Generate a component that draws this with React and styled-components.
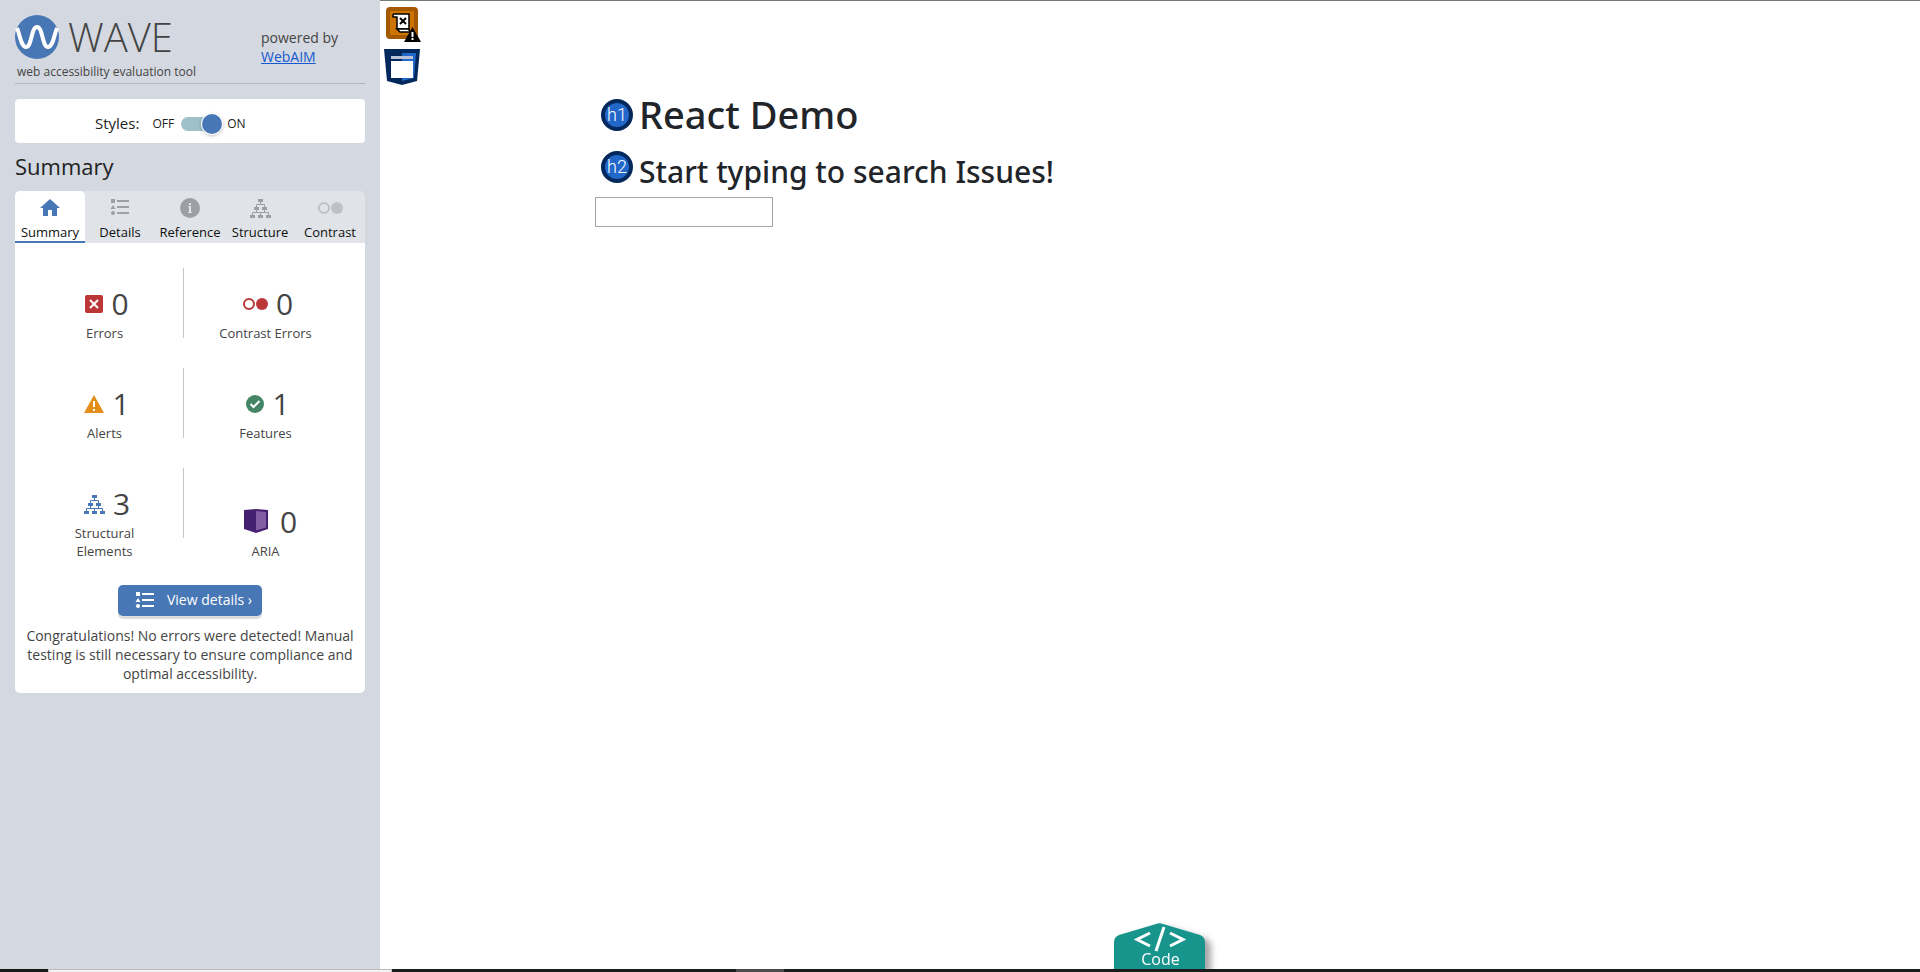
import React, { useState } from "react";
import styled, { createGlobalStyle } from "styled-components";

const GlobalStyle = createGlobalStyle`
  *, *::before, *::after { box-sizing: border-box; }
  body {
    margin: 0;
    background: #fff;
    color: #444;
    font-family: "Open Sans", "Noto Sans", sans-serif;
    font-size: 14px;
  }
  h1, h2, p, ul { margin: 0; padding: 0; font-weight: 400; }
  button, input { font-family: inherit; }
  svg { display: block; flex: none; }
`;

const Screen = styled.div`
  display: flex;
  flex-direction: column;
  min-height: 100vh;
`;

const Workspace = styled.div`
  display: flex;
  flex: 1;
`;

/* ---------- Sidebar ---------- */

const Sidebar = styled.aside`
  flex: none;
  width: 380px;
  padding: 15px;
  background: #d4d8e0;
`;

const Header = styled.header`
  display: flex;
  justify-content: space-between;
  height: 69px;
  border-bottom: 1px solid #b3b7bb;
`;

const Brand = styled.div`
  display: flex;
  flex-direction: column;
`;

const Logo = styled.div`
  display: flex;
  align-items: center;
  gap: 9px;
  height: 44px;
  font-size: 40px;
  font-weight: 300;
  line-height: 44px;
`;

const Tagline = styled.span`
  padding: 4px 2px 0;
  font-size: 12px;
  line-height: 18px;
`;

const Powered = styled.div`
  width: 104px;
  padding-top: 13px;
  line-height: 19px;
`;

const BrandLink = styled.a`
  display: table;
  color: #1558d0;
`;

const StylesCard = styled.div`
  display: flex;
  align-items: center;
  height: 44px;
  margin-top: 15px;
  padding: 6px 80px 0;
  border-radius: 4px;
  background: #fff;
  color: #222;
`;

const StylesLabel = styled.label`
  margin-right: 13px;
  padding-bottom: 2px;
  font-size: 15px;
  line-height: 20px;
`;

const StateText = styled.span`
  font-size: 12px;
  line-height: 16px;
`;

const Toggle = styled.input`
  appearance: none;
  position: relative;
  width: 41px;
  height: 20px;
  margin: 0 5px 0 7px;
  cursor: pointer;

  &::before {
    content: "";
    position: absolute;
    inset: 3px 2px 3px 0;
    border-radius: 7px;
    background: #9fc1ca;
  }

  &::after {
    content: "";
    position: absolute;
    top: 0;
    left: ${({ checked }) => (checked ? "21px" : "0")};
    width: 20px;
    height: 20px;
    border-radius: 50%;
    background: #4777b5;
    box-shadow: 0 0 0 1px #fff, 0 1px 4px rgba(0, 0, 0, 0.4);
  }
`;

const SectionTitle = styled.h2`
  padding: 7px 0 9px;
  color: #222;
  font-size: 22px;
  line-height: 32px;
`;

const TabList = styled.div`
  display: grid;
  grid-template-columns: repeat(5, 1fr);
  border-radius: 5px 5px 0 0;
  background: #e0e3e7;
`;

const Tab = styled.button`
  display: flex;
  flex-direction: column;
  align-items: center;
  gap: 4px;
  height: 52px;
  padding: 7px 0 0;
  border: 0;
  border-bottom: 2px solid ${({ $active }) => ($active ? "#4777b5" : "transparent")};
  border-radius: 5px 5px 0 0;
  background: ${({ $active }) => ($active ? "#fff" : "transparent")};
  color: #111;
  font-size: 13px;
  line-height: 20px;
  cursor: pointer;
`;

const TabIcon = styled.span`
  display: flex;
  color: ${({ $active }) => ($active ? "#4777b5" : "#9c9fa3")};
  opacity: ${({ $dim }) => ($dim ? 0.5 : 1)};
`;

const Panel = styled.section`
  padding: 25px 0 10px;
  border-radius: 0 0 5px 5px;
  background: #fff;
`;

const StatList = styled.ul`
  display: flex;
  flex-direction: column;
  gap: 26px;
  padding: 0 18px 0 11px;
  list-style: none;
`;

const StatRow = styled.li`
  display: grid;
  grid-template-columns: 157fr 1px 163fr;
  align-items: end;
`;

const Divider = styled.span`
  align-self: start;
  height: 70px;
  background: #c4c6c9;
`;

const Stat = styled.div`
  display: flex;
  flex-direction: column;
  align-items: center;
  padding-top: 16px;
`;

const StatCount = styled.div`
  display: flex;
  align-items: center;
  gap: 8px;
  height: 40px;
  padding-left: ${({ $wide }) => ($wide ? "10px" : "5px")};
  font-size: 30px;
  line-height: 40px;
`;

const StatLabel = styled.span`
  width: ${({ $narrow }) => ($narrow ? "80px" : "auto")};
  font-size: 13px;
  line-height: 18px;
  text-align: center;
`;

const DetailsButton = styled.button`
  display: flex;
  align-items: center;
  gap: 12px;
  height: 31px;
  margin: 25px auto 10px;
  padding: 0 10px 0 17px;
  border: 0;
  border-radius: 5px;
  background: #4777b5;
  box-shadow: 0 3px 0 #ddd;
  color: #fff;
  font-size: 14px;
  line-height: 20px;
  cursor: pointer;
`;

const ButtonText = styled.span`
  padding-bottom: 2px;
`;

const Message = styled.p`
  padding: 0 8px;
  line-height: 19px;
  text-align: center;
`;

/* ---------- Evaluated page ---------- */

const Page = styled.main`
  position: relative;
  flex: 1;
  border-top: 1px solid #747b70;
`;

const PageMarkers = styled.div`
  position: absolute;
  top: 6px;
  left: 4px;
  display: flex;
  flex-direction: column;
  gap: 5px;
`;

const Container = styled.div`
  max-width: 1140px;
  margin: 0 auto;
  padding: 90px 15px 0;
  color: #212529;
  font-family: "Noto Sans", "Open Sans", sans-serif;
`;

const HeadingLine = styled.div`
  display: flex;
  align-items: flex-start;
  gap: 6px;
  padding-left: 6px;
  margin-bottom: ${({ $level }) => ($level === 1 ? "14px" : "4px")};
`;

const PageTitle = styled.h1`
  font-size: 38px;
  font-weight: 500;
  line-height: 46px;
`;

const PageSubtitle = styled.h2`
  font-size: 30px;
  font-weight: 500;
  line-height: 42px;
`;

const SearchInput = styled.input`
  display: block;
  width: 178px;
  height: 30px;
  border: 1px solid #a5a5a5;
  background: #fff;
  font-size: 16px;
`;

const HeadingBadge = styled.span`
  display: flex;
  align-items: center;
  justify-content: center;
  width: 32px;
  height: 32px;
  margin-top: ${({ $level }) => ($level === 1 ? "8px" : "0")};
  border: 4px solid #03285c;
  border-radius: 50%;
  background: #2268cb;
  color: #fff;
  font-family: Roboto, sans-serif;
  font-size: 18px;
  font-weight: 300;
  line-height: 24px;
`;

const CodeTab = styled.button`
  position: absolute;
  bottom: 0;
  left: calc(50% - 36px);
  width: 91px;
  height: 46px;
  padding: 0;
  border: 0;
  background: none;
  filter: drop-shadow(6px 4px 3px rgba(0, 0, 0, 0.35));
  clip-path: inset(0 -12px 0 0);
  color: #fff;
  cursor: pointer;
`;

const CodeLabel = styled.span`
  position: absolute;
  right: 0;
  bottom: 0;
  left: 0;
  padding-left: 2px;
  font-size: 16px;
  line-height: 20px;
`;

/* ---------- Taskbar edge ---------- */

const EdgeBar = styled.footer`
  display: flex;
  height: 3px;
  background: #1a1b1b;
`;

const EdgeSearch = styled.span`
  width: 344px;
  margin-left: 48px;
  border: 1px solid #bbb;
  border-bottom: 0;
  background: #f3f3f1;
`;

const EdgeActive = styled.span`
  width: 48px;
  margin-left: 344px;
  background: #4b4b4b;
`;

/* ---------- Icons ---------- */

const WaveLogo = () => (
  <svg width="44" height="44" viewBox="0 0 44 44" aria-hidden="true">
    <circle cx="22" cy="22" r="22" fill="#4777b5" />
    <path
      d="M2 13 C5 20 6 32 11 32 C17 32 16 12 22 12 C28 12 27 32 33 32 C38 32 39 20 42 13"
      fill="none"
      stroke="#fff"
      strokeWidth="4"
    />
  </svg>
);

const HomeIcon = () => (
  <svg width="20" height="20" viewBox="0 0 20 20" fill="currentColor" aria-hidden="true">
    <path d="M10 1 20 10H17V18H12V12H8V18H3V10H0Z" />
  </svg>
);

const ListIcon = () => (
  <svg width="20" height="20" viewBox="0 0 20 20" fill="currentColor" aria-hidden="true">
    <path d="M1 1h4v4H1zM3 7l2.5 4h-5zM7 2h12v2H7zM7 8h12v2H7zM7 14h12v2H7z" />
    <circle cx="3" cy="15" r="2" />
  </svg>
);

const InfoIcon = () => (
  <svg width="20" height="20" viewBox="0 0 20 20" aria-hidden="true">
    <circle cx="10" cy="10" r="10" fill="currentColor" />
    <path d="M9 5h2v2H9zM8 8h3v6h1v1H8v-1h1V9H8z" fill="#e0e3e7" />
  </svg>
);

const TreeIcon = () => (
  <svg width="21" height="20" viewBox="0 0 21 20" fill="currentColor" aria-hidden="true">
    <path d="M8 1h5v3H8zM4 9h5v3H4zM12 9h5v3h-5zM0 17h5v3H0zM8 17h5v3H8zM16 17h5v3h-5z" />
    <path
      d="M10.500 4v2.500M6.500 9V6.500h8V9M6.500 12v2.500M14.500 12v2.500M2.500 17v-2.500h16V17M10.500 14.500V17"
      fill="none"
      stroke="currentColor"
    />
  </svg>
);

const ContrastIcon = ({ color = "currentColor" }) => (
  <svg width="25" height="20" viewBox="0 0 25 20" aria-hidden="true">
    <circle cx="6" cy="10" r="5" fill="none" stroke={color} strokeWidth="2" />
    <circle cx="19" cy="10" r="6" fill={color} />
  </svg>
);

const ErrorIcon = () => (
  <svg width="18" height="18" viewBox="0 0 18 18" aria-hidden="true">
    <rect width="18" height="18" rx="2" fill="#bb3737" />
    <path d="M5 5l8 8M13 5l-8 8" stroke="#fff" strokeWidth="2" />
  </svg>
);

const AlertIcon = () => (
  <svg width="20" height="18" viewBox="0 0 20 18" aria-hidden="true">
    <path d="M10 0 20 18H0Z" fill="#e38e18" />
    <path d="M9 6h2v6H9zM9 14h2v2H9z" fill="#fff" />
  </svg>
);

const FeatureIcon = () => (
  <svg width="18" height="18" viewBox="0 0 18 18" aria-hidden="true">
    <circle cx="9" cy="9" r="9" fill="#448565" />
    <path d="M4.500 9l3 3 6-6" fill="none" stroke="#fff" strokeWidth="2" />
  </svg>
);

const AriaIcon = () => (
  <svg width="28" height="26" viewBox="0 0 28 26" aria-hidden="true">
    <path d="M0 1 12 0 24 1V20L12 24 0 20Z" fill="#462070" />
    <path d="M12 2 22 3V18.500L12 21.500Z" fill="#825da3" />
  </svg>
);

const ScriptMarker = () => (
  <svg width="37" height="37" viewBox="0 0 37 37" role="img" aria-label="Noscript element">
    <rect x="2" y="0" width="32" height="32" rx="4" fill="#a45800" />
    <rect x="6" y="4" width="24" height="24" rx="1" fill="#cd7400" />
    <path
      d="M12 7H25V22H13V10H9V8Q9 7 10 7Z"
      fill="#fff"
      stroke="#000"
      strokeWidth="1.500"
      strokeLinejoin="round"
    />
    <path d="M13 22H24L27 25H16Z" fill="#fff" stroke="#000" strokeWidth="1.500" />
    <path d="M16 11l6 6M22 11l-6 6" stroke="#000" strokeWidth="2" />
    <path d="M28.500 20 37 35H20Z" fill="#000" />
    <path d="M27.500 25h2v5h-2zM27.500 31h2v2h-2z" fill="#fff" />
  </svg>
);

const RegionMarker = () => (
  <svg width="36" height="36" viewBox="0 0 36 36" role="img" aria-label="Page region">
    <path d="M0 0H36L33 32 18 36 3 32Z" fill="#03285c" />
    <path d="M18 4H32L30 29 18 32Z" fill="#2268cb" />
    <path d="M7 7h22v3H7z" fill="#b8c3d8" />
    <path d="M7 12h22v17H7z" fill="#fff" />
  </svg>
);

const CodeShape = () => (
  <svg width="91" height="46" viewBox="0 0 91 46" aria-hidden="true">
    <path d="M0 46V19Q0 14 5 12L42 1Q45.500 -0.500 49 1L86 12Q91 14 91 19V46Z" fill="#17958d" />
    <path
      d="M36 10 23 16.500 36 23M56 10 69 16.500 56 23M50 4 42 28"
      fill="none"
      stroke="#fff"
      strokeWidth="3"
    />
  </svg>
);

/* ---------- Data ---------- */

const tabs = [
  { name: "Summary", Icon: HomeIcon },
  { name: "Details", Icon: ListIcon },
  { name: "Reference", Icon: InfoIcon },
  { name: "Structure", Icon: TreeIcon },
  { name: "Contrast", Icon: ContrastIcon, dim: true },
];

const BlueTree = styled.span`
  color: #4777b5;
`;

const statRows = [
  [
    { label: "Errors", count: 0, icon: <ErrorIcon /> },
    { label: "Contrast Errors", count: 0, icon: <ContrastIcon color="#bb3737" /> },
  ],
  [
    { label: "Alerts", count: 1, icon: <AlertIcon /> },
    { label: "Features", count: 1, icon: <FeatureIcon /> },
  ],
  [
    { label: "Structural Elements", count: 3, narrow: true, icon: <BlueTree><TreeIcon /></BlueTree> },
    { label: "ARIA", count: 0, wide: true, icon: <AriaIcon /> },
  ],
];

function StatItem({ stat }) {
  return (
    <Stat>
      <StatCount $wide={stat.wide}>
        {stat.icon}
        {stat.count}
      </StatCount>
      <StatLabel $narrow={stat.narrow}>{stat.label}</StatLabel>
    </Stat>
  );
}

export default function App() {
  const [stylesOn, setStylesOn] = useState(true);
  const [activeTab, setActiveTab] = useState("Summary");

  return (
    <Screen>
      <GlobalStyle />
      <Workspace>
        <Sidebar>
          <Header>
            <Brand>
              <Logo>
                <WaveLogo />
                WAVE
              </Logo>
              <Tagline>web accessibility evaluation tool</Tagline>
            </Brand>
            <Powered>
              powered by
              <BrandLink href="#webaim">WebAIM</BrandLink>
            </Powered>
          </Header>

          <StylesCard>
            <StylesLabel htmlFor="styles-toggle">Styles:</StylesLabel>
            <StateText>OFF</StateText>
            <Toggle
              id="styles-toggle"
              type="checkbox"
              checked={stylesOn}
              onChange={(event) => setStylesOn(event.target.checked)}
            />
            <StateText>ON</StateText>
          </StylesCard>

          <SectionTitle>Summary</SectionTitle>

          <TabList role="tablist">
            {tabs.map(({ name, Icon, dim }) => (
              <Tab
                key={name}
                type="button"
                role="tab"
                aria-selected={activeTab === name}
                $active={activeTab === name}
                onClick={() => setActiveTab(name)}
              >
                <TabIcon $active={activeTab === name} $dim={dim}>
                  <Icon />
                </TabIcon>
                {name}
              </Tab>
            ))}
          </TabList>

          <Panel>
            <StatList>
              {statRows.map(([left, right]) => (
                <StatRow key={left.label}>
                  <StatItem stat={left} />
                  <Divider />
                  <StatItem stat={right} />
                </StatRow>
              ))}
            </StatList>
            <DetailsButton type="button">
              <ListIcon />
              <ButtonText>View details ›</ButtonText>
            </DetailsButton>
            <Message>
              Congratulations! No errors were detected! Manual testing is still necessary to ensure
              compliance and optimal accessibility.
            </Message>
          </Panel>
        </Sidebar>

        <Page>
          <PageMarkers>
            <ScriptMarker />
            <RegionMarker />
          </PageMarkers>
          <Container>
            <HeadingLine $level={1}>
              <HeadingBadge $level={1}>h1</HeadingBadge>
              <PageTitle>React Demo</PageTitle>
            </HeadingLine>
            <HeadingLine $level={2}>
              <HeadingBadge $level={2}>h2</HeadingBadge>
              <PageSubtitle>Start typing to search Issues!</PageSubtitle>
            </HeadingLine>
            <SearchInput type="text" aria-label="Search issues" />
          </Container>
          <CodeTab type="button">
            <CodeShape />
            <CodeLabel>Code</CodeLabel>
          </CodeTab>
        </Page>
      </Workspace>
      <EdgeBar>
        <EdgeSearch />
        <EdgeActive />
      </EdgeBar>
    </Screen>
  );
}
